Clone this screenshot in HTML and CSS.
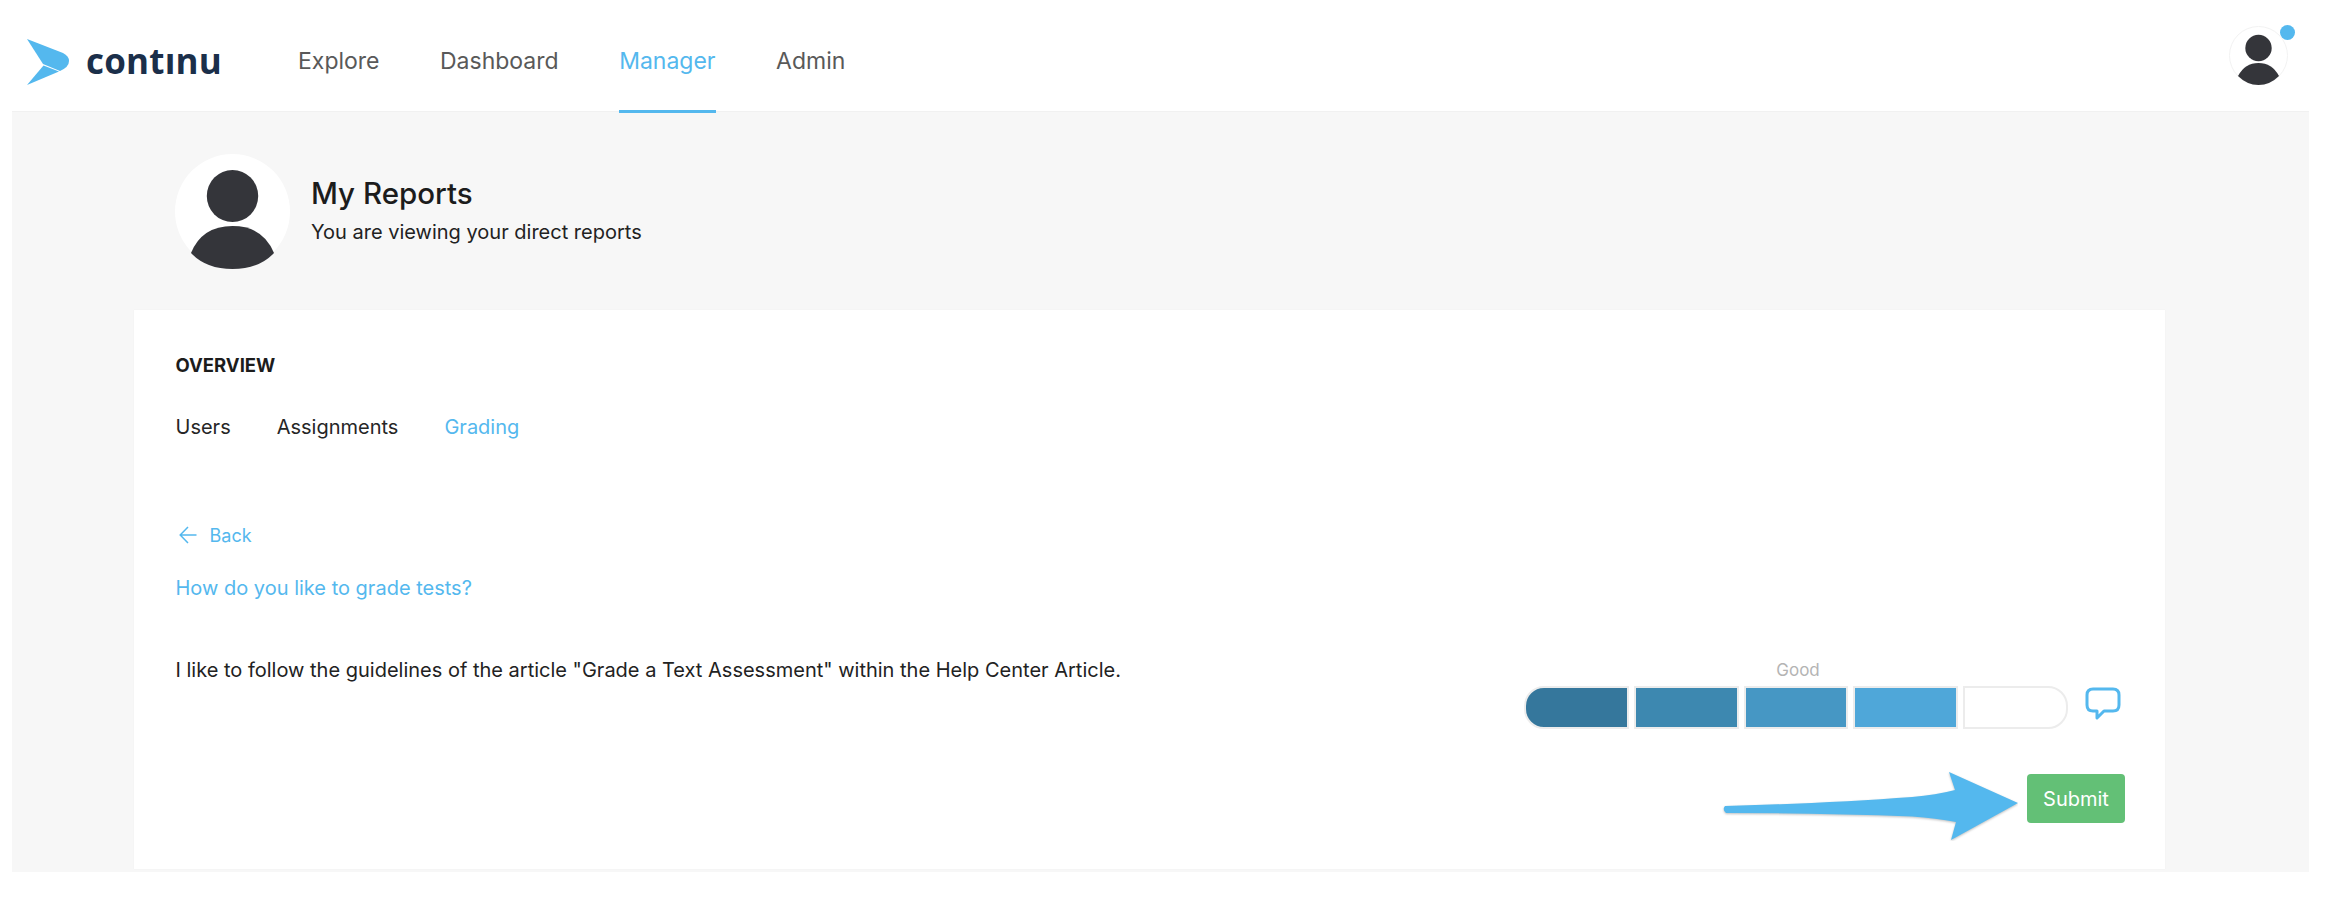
FILE: index.html
```html
<!DOCTYPE html>
<html lang="en">
<head>
<meta charset="utf-8">
<title>Continu - My Reports</title>
<link rel="stylesheet" href="styles.css">
</head>
<body>
<header class="topbar">
  <a class="logo">
    <svg class="logo-mark" width="44" height="48" viewBox="26 38 44 48">
      <path d="M27 39 L63 53 Q69 56 69 61 Q69 67 60 71 L43 64 Z" fill="#54b8ee"/>
      <path d="M43.5 65.5 L59 71.5 L27 85 Z" fill="#54b8ee"/>
    </svg>
    <span class="logo-word">contınu</span>
  </a>
  <nav class="mainnav">
    <a class="mainnav-item">Explore</a>
    <a class="mainnav-item">Dashboard</a>
    <a class="mainnav-item is-active">Manager</a>
    <a class="mainnav-item">Admin</a>
  </nav>
  <div class="user-menu">
    <svg width="59" height="59" viewBox="0 0 59 59">
      <circle cx="29.5" cy="29.5" r="29" fill="#fff" stroke="#f2f2f2"/>
      <circle cx="29.5" cy="22" r="13.2" fill="#34353a"/>
      <path d="M9 50 Q16 37 29.5 37 Q43 37 50 50 Q41 59 29.5 59 Q18 59 9 50 Z" fill="#34353a"/>
    </svg>
    <span class="user-dot"></span>
  </div>
</header>
<main class="page">
  <section class="profile">
    <svg class="profile-pic" width="115" height="115" viewBox="0 0 115 115">
      <circle cx="57.5" cy="57.5" r="57.5" fill="#fff"/>
      <ellipse cx="57.5" cy="42" rx="25.7" ry="26" fill="#34353a"/>
      <path d="M16 99 Q27 72 57.5 72 Q88 72 99 99 Q84 115 57.5 115 Q31 115 16 99 Z" fill="#34353a"/>
    </svg>
    <div class="profile-text">
      <h1 class="profile-title">My Reports</h1>
      <p class="profile-sub">You are viewing your direct reports</p>
    </div>
  </section>
  <section class="card">
    <h2 class="card-title">OVERVIEW</h2>
    <nav class="tabs">
      <a class="tab">Users</a>
      <a class="tab">Assignments</a>
      <a class="tab is-active">Grading</a>
    </nav>
    <a class="back">
      <svg width="18" height="18" viewBox="0 0 18 18" fill="none" stroke="#54b8ee" stroke-width="1.5">
        <path d="M17.5 9 H1.5 M9 1 L1.2 9 L9 17"/>
      </svg>
      <span>Back</span>
    </a>
    <h3 class="question">How do you like to grade tests?</h3>
    <div class="answer-row">
      <p class="answer">I like to follow the guidelines of the article "Grade a Text Assessment" within the Help Center Article.</p>
      <div class="rating">
        <div class="rating-label">Good</div>
        <div class="rating-bar">
          <span class="seg seg-1"></span>
          <span class="seg seg-2"></span>
          <span class="seg seg-3"></span>
          <span class="seg seg-4"></span>
          <span class="seg seg-5"></span>
        </div>
      </div>
      <svg class="comment" width="36" height="33" viewBox="0 0 36 33" fill="none" stroke="#54b8ee" stroke-width="3" stroke-linejoin="round">
        <path d="M8 2 H28 Q34 2 34 8 V18 Q34 24 28 24 H19 L12 31 L12 24 H8 Q2 24 2 18 V8 Q2 2 8 2 Z"/>
      </svg>
    </div>
    <div class="actions">
      <button class="submit">Submit</button>
    </div>
    <svg class="callout" width="296" height="70" viewBox="0 0 296 70">
      <path d="M3 35 Q110 32 190 26 Q214 24 233 19 L227 1 L296 32 L229 69 L234 51 Q214 47 190 45.500 Q100 42 4 42 Q0 38.500 3 35 Z" fill="#54b8ee" class="callout-shape"/>
    </svg>
  </section>
</main>
</body>
</html>
```
FILE: styles.css
```css
* { box-sizing: border-box; }
html, body { margin: 0; padding: 0; background: #fff; }
body {
  height: 908px;
  overflow: hidden;
  font-family: Inter, "Liberation Sans", sans-serif;
  color: #1e1e1e;
}
.topbar {
  display: flex;
  align-items: center;
  height: 111px;
  padding-left: 26px;
  position: relative;
  z-index: 1;
}
.logo {
  display: flex;
  align-items: center;
  gap: 16px;
  width: 272px;
  padding-top: 13px;
}
.logo-mark { display: block; flex: none; }
.logo-word {
  font-family: "Open Sans", "Noto Sans", sans-serif;
  font-weight: 700;
  font-size: 35px;
  line-height: 40px;
  color: #1b2f4a;
  letter-spacing: 0.2px;
  margin-top: -3px;
}
.mainnav {
  display: flex;
  gap: 60.500px;
  height: 113px;
  align-self: flex-start;
}
.mainnav-item {
  display: flex;
  align-items: center;
  height: 113px;
  padding-top: 12px;
  font-size: 23px;
  color: #595959;
  border-bottom: 3px solid transparent;
}
.mainnav-item.is-active {
  color: #54b8ee;
  border-bottom-color: #54b8ee;
}
.user-menu {
  position: relative;
  margin-left: auto;
  margin-right: 58px;
  width: 59px;
  height: 59px;
  margin-top: -1px;
}
.user-menu svg { display: block; }
.user-dot {
  position: absolute;
  top: -1px;
  right: -7px;
  width: 15px;
  height: 15px;
  border-radius: 50%;
  background: #54b8ee;
}
.page {
  height: 761px;
  margin: 0 37px 0 12px;
  padding: 42px 144px 0 122px;
  background: #f7f7f7;
  border-top: 1px solid #f1f1f1;
}
.profile {
  display: flex;
  align-items: center;
  gap: 21px;
  padding-left: 41px;
  height: 115px;
}
.profile-pic { display: block; flex: none; }
.profile-text { padding-bottom: 3px; }
.profile-title {
  margin: 0 0 7px;
  font-size: 29.500px;
  line-height: 36px;
  font-weight: 500;
  color: #1c1c1c;
}
.profile-sub {
  margin: 0;
  font-size: 20px;
  line-height: 28px;
  color: #222;
}
.card {
  position: relative;
  height: 559px;
  margin-top: 41px;
  padding: 43px 40px 0 41.500px;
  background: #fff;
  box-shadow: 0 0 1px rgba(0,0,0,0.06);
}
.card-title {
  margin: 0;
  font-size: 18.500px;
  line-height: 24px;
  font-weight: 700;
  color: #1c1c1c;
}
.tabs {
  display: flex;
  gap: 46px;
  margin-top: 36px;
}
.tab {
  font-size: 20px;
  line-height: 28px;
  color: #262626;
}
.tab.is-active { color: #54b8ee; }
.back {
  display: flex;
  align-items: center;
  gap: 13px;
  margin-top: 82px;
  padding-left: 3px;
  height: 24px;
  font-size: 18px;
  color: #54b8ee;
}
.back svg { display: block; }
.question {
  margin: 27px 0 0;
  font-size: 20px;
  line-height: 28px;
  font-weight: 400;
  color: #54b8ee;
}
.answer-row {
  display: flex;
  align-items: flex-start;
  margin-top: 54px;
}
.answer {
  flex: 1;
  margin: 0;
  font-size: 20px;
  line-height: 28px;
  color: #222;
}
.rating { width: 544px; margin-top: 4px; }
.rating-label {
  text-align: center;
  font-size: 17px;
  line-height: 20px;
  color: #b4b4b4;
  padding-left: 4px;
}
.rating-bar {
  display: grid;
  grid-template-columns: repeat(5, 1fr);
  gap: 5px;
  height: 43px;
  margin-top: 6px;
}
.seg {
  border: 2px solid #ececec;
}
.seg-1 { background: #35779c; border-radius: 20px 0 0 20px; }
.seg-2 { background: #3d88b0; }
.seg-3 { background: #4697c4; }
.seg-4 { background: #4fa7d9; }
.seg-5 { background: #fff; border-radius: 0 20px 20px 0; }
.comment {
  display: block;
  flex: none;
  margin: 31px 4px 0 17px;
}
.actions {
  display: flex;
  justify-content: flex-end;
  margin-top: 45px;
}
.submit {
  width: 98px;
  height: 49px;
  border: 0;
  border-radius: 4px;
  background: #63c076;
  color: #fff;
  font-family: inherit;
  font-size: 20px;
}
.callout {
  position: absolute;
  left: 1588px;
  top: 461px;
  display: block;
}
.callout-shape {
  filter: drop-shadow(0 1px 1px rgba(0,0,0,0.25));
}
```
